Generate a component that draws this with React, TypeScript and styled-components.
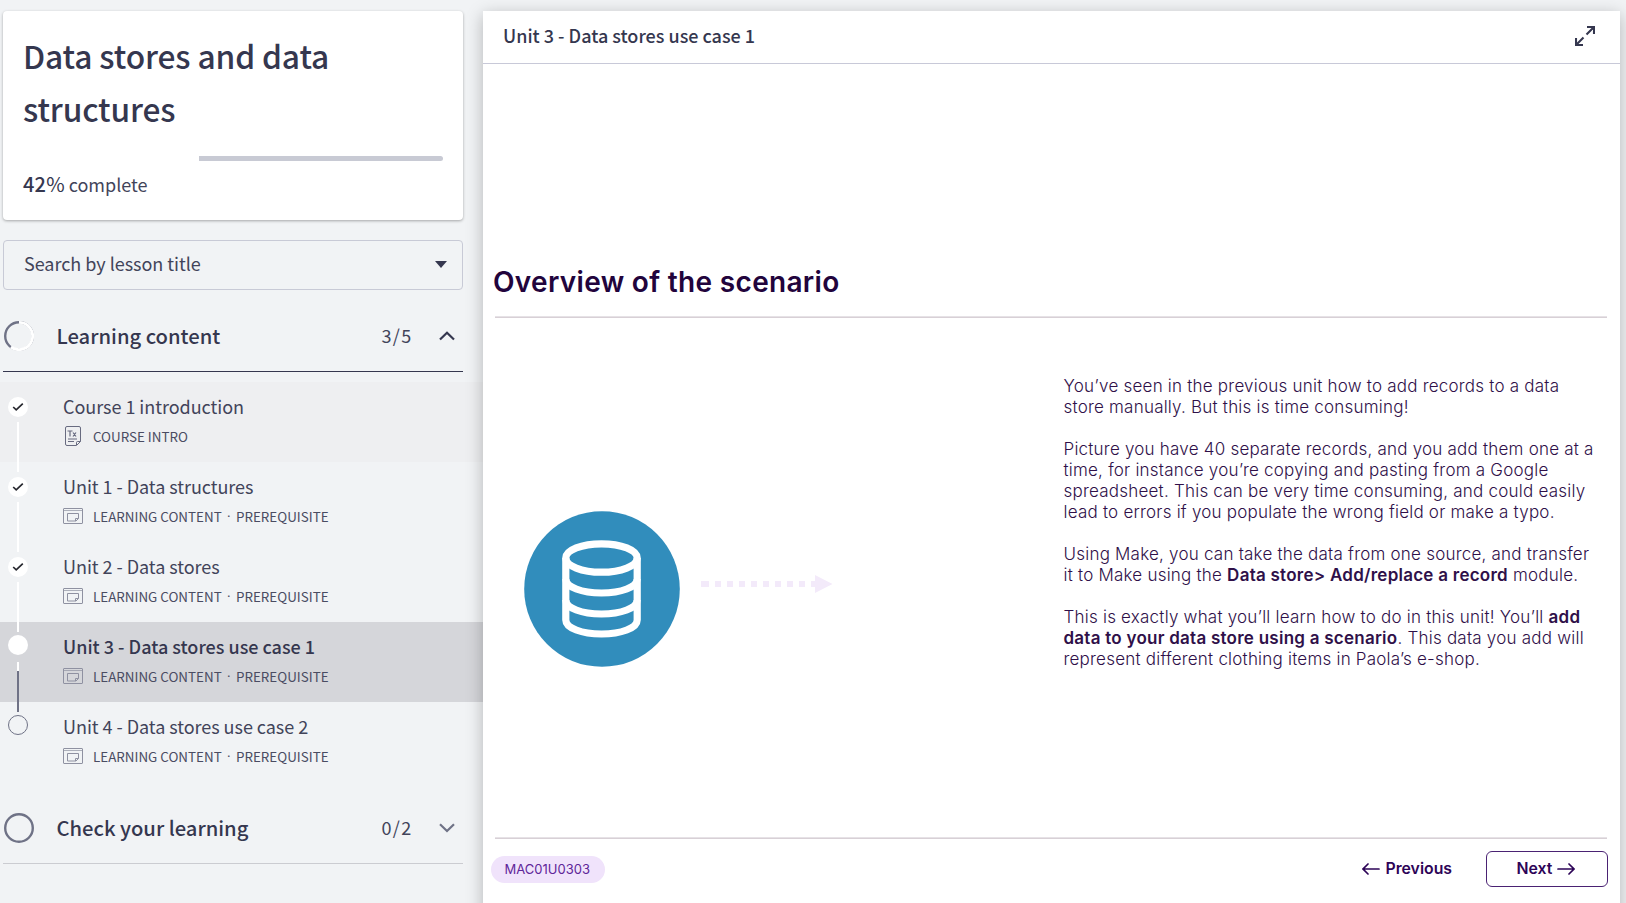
import React from "react";
import styled, { createGlobalStyle } from "styled-components";

const sans = `"Noto Sans CJK SC", "Open Sans", sans-serif`;
const inter = `Inter, "Liberation Sans", sans-serif`;
const ink = "#35374f";
const softInk = "#42445a";
const slate = "#6f7286";

const GlobalStyle = createGlobalStyle`
  * { box-sizing: border-box; }
  body { margin: 0; background: #f1f3f5; color: ${ink}; font-family: ${sans}; overflow: hidden; }
  h1, h2, p { margin: 0; }
  button { font: inherit; color: inherit; background: none; border: 0; padding: 0; }
  svg { display: block; flex: none; }
`;

const Page = styled.div`
  display: flex;
  height: 903px;
  padding-top: 11px;
  overflow: hidden;
`;

/* ---------- sidebar ---------- */

const Sidebar = styled.aside`
  width: 483px;
  flex: none;
`;

const CourseCard = styled.section`
  width: 460px;
  height: 209px;
  margin-left: 3px;
  padding: 18px 20px 0;
  background: #fff;
  border-radius: 4px;
  box-shadow: 0 1px 3px rgba(0, 0, 0, 0.32);
`;

const CourseTitle = styled.h1`
  font-size: 31.7px;
  font-weight: 500;
  line-height: 53px;
  letter-spacing: -0.12px;
  width: 380px;
`;

const Track = styled.div`
  display: flex;
  justify-content: flex-end;
  height: 5px;
  margin-top: 21px;
`;

const Remaining = styled.div<{ $percent: number }>`
  width: ${(p) => p.$percent}%;
  background: #c8cad4;
  border-radius: 0 3px 3px 0;
`;

const Progress = styled.p`
  margin-top: 8px;
  font-size: 18px;
  line-height: 30px;
  color: ${softInk};
`;

const Percent = styled.span`
  font-size: 20px;
  color: ${ink};
  b { font-weight: 500; letter-spacing: 0.2px; }
`;

const Search = styled.button`
  display: flex;
  align-items: center;
  justify-content: space-between;
  width: 460px;
  height: 50px;
  margin: 20px 0 0 3px;
  padding: 0 15px 4px 20px;
  border: 1px solid #c8cad6;
  border-radius: 4px;
  font-size: 18px;
  line-height: 26px;
  letter-spacing: -0.03px;
  color: ${softInk};
  svg { margin-top: 3px; }
`;

const SectionHead = styled.div<{ $open?: boolean }>`
  display: flex;
  align-items: center;
  width: 460px;
  height: 82px;
  margin-left: 3px;
  padding: 11px 8px 0 1px;
  border-bottom: 1px solid ${(p) => (p.$open ? "#35374f" : "#cbccd1")};
`;

const SectionTitle = styled.h2`
  flex: 1;
  margin-left: 22.5px;
  font-size: 20.2px;
  font-weight: 500;
  line-height: 30px;
`;

const Count = styled.span`
  padding-bottom: 2px;
  font-size: 18px;
  letter-spacing: 1.3px;
  margin-right: 26.5px;
  color: ${softInk};
`;

const Lessons = styled.ul`
  list-style: none;
  margin: 10px 0 0;
  padding: 0;
`;

type Tone = "intro" | "current" | "plain";
const tones: Record<Tone, string> = {
  intro: "#eeeff1",
  current: "#d5d6da",
  plain: "transparent",
};

const Lesson = styled.li<{ $tone: Tone }>`
  display: flex;
  height: 80px;
  background: ${(p) => tones[p.$tone]};
`;

const Rail = styled.div`
  position: relative;
  width: 63px;
  flex: none;
`;

const Dot = styled.span<{ $state: "done" | "current" | "todo" }>`
  display: grid;
  place-items: center;
  width: 20px;
  height: 20px;
  margin: ${(p) => (p.$state === "done" ? 15 : 13)}px 0 0 8px;
  border-radius: 50%;
  border: ${(p) => (p.$state === "todo" ? `1px solid ${slate}` : "0")};
  background: ${(p) => (p.$state === "todo" ? "transparent" : "#fff")};
`;

const Connector = styled.i<{ $half?: boolean }>`
  position: absolute;
  z-index: 1;
  top: 40px;
  left: 17px;
  width: 2px;
  height: 50px;
  background: ${(p) => (p.$half ? `linear-gradient(#fff 9px, ${slate} 9px)` : "#fff")};
`;

const LessonBody = styled.div`
  padding-top: 11px;
`;

const LessonTitle = styled.div<{ $strong: boolean }>`
  font-size: 18px;
  line-height: 26px;
  letter-spacing: ${(p) => (p.$strong ? 0 : -0.04)}px;
  font-weight: ${(p) => (p.$strong ? 500 : 400)};
  color: ${(p) => (p.$strong ? ink : softInk)};
  white-space: nowrap;
`;

const Meta = styled.div`
  display: flex;
  align-items: center;
  height: 20px;
  margin-top: 7px;
  font-size: 13.4px;
  line-height: 20px;
  color: #4a4c62;
  white-space: nowrap;
`;

const MetaIcon = styled.span`
  width: 30px;
`;

const Separator = styled.span`
  width: 14.3px;
  text-align: center;
  font-family: "Open Sans", sans-serif;
  font-weight: 500;
`;

/* ---------- lesson panel ---------- */

const Panel = styled.main`
  position: relative;
  z-index: 2;
  display: flex;
  flex-direction: column;
  width: 1137px;
  flex: none;
  height: 920px;
  background: #fff;
  box-shadow: 0 4px 16px rgba(0, 0, 0, 0.26);
`;

const PanelHead = styled.header`
  display: flex;
  align-items: center;
  justify-content: space-between;
  height: 53px;
  flex: none;
  padding: 0 25px 4px 20px;
  border-bottom: 1px solid #c8c9d8;
  font-size: 18px;
  line-height: 26px;
  font-weight: 500;
  svg { margin-top: 2px; }
`;

const Slide = styled.div`
  display: flex;
  flex-direction: column;
  margin: 0 13px 0 12px;
  padding-top: 201px;
  font-family: ${inter};
  color: #22043c;
`;

const SlideTitle = styled.h2`
  height: 51px;
  margin-left: -2px;
  font-size: 28px;
  line-height: 34px;
  font-weight: 600;
  letter-spacing: 0.32px;
`;

const Rule = styled.hr`
  width: 100%;
  height: 2px;
  margin: 0;
  border: 0;
  background: linear-gradient(#e6e2e6 1px, #d8d0d6 1px);
`;

const Columns = styled.div`
  display: flex;
  height: 519px;
`;

const Illustration = styled.div`
  display: flex;
  width: 568.5px;
  flex: none;
  padding: 193px 0 0 28.5px;
  gap: 21px;
`;

const ArrowHolder = styled.div`
  padding-top: 64px;
`;

const Copy = styled.div`
  padding-top: 58px;
  font-size: 17px;
  font-weight: 300;
  line-height: 21.03px;
  letter-spacing: 0.22px;
  color: #2f1049;
  white-space: nowrap;
  p + p { margin-top: 21.03px; }
  b { font-weight: 600; letter-spacing: 0.25px; }
`;

const Footer = styled.footer`
  display: flex;
  align-items: center;
  height: 60px;
  margin: 0 -1px 0 -4.5px;
  color: #2d0457;
  font-size: 15.8px;
  font-weight: 600;
`;

const Badge = styled.span`
  display: flex;
  align-items: center;
  justify-content: center;
  width: 114.500px;
  height: 27px;
  padding-right: 1px;
  border-radius: 14px;
  background: #f0e3fb;
  color: #5f2699;
  font-size: 13px;
  font-weight: 400;
  margin-right: auto;
`;

const NavButton = styled.button<{ $outlined?: boolean }>`
  display: flex;
  align-items: center;
  justify-content: center;
  gap: 5px;
  height: 36px;
  padding: ${(p) => (p.$outlined ? "0 2px 1px 0" : "0 0 1px")};
  width: ${(p) => (p.$outlined ? "122px" : "auto")};
  margin-left: ${(p) => (p.$outlined ? 34 : 0)}px;
  border: ${(p) => (p.$outlined ? "1px solid #4a2273" : "0")};
  border-radius: 6px;
`;

/* ---------- drawings ---------- */

const TextDocIcon = () => (
  <svg width="20" height="20" viewBox="0 0 20 20" fill="none" stroke="#686b80" strokeWidth="1">
    <path d="M4 .5h12q1.500 0 1.500 1.500v13.500l-4 4H4q-1.500 0-1.500-1.500V2Q2.500.5 4 .5Z" />
    <path d="M13.500 19v-2.500q0-1 1-1h3" />
    <path d="M4.500 5h5M7 5v5.500M10 6.500l3 4M13 6.500l-3 4" strokeWidth="1.200" />
    <path d="M5 13h9M5 15.500h6" />
  </svg>
);

const SlideIcon = () => (
  <svg width="20" height="16" viewBox="0 0 20 16" fill="none" stroke="#8f91a1" strokeWidth="1">
    <rect x=".5" y=".5" width="19" height="15" rx=".5" />
    <path d="M1 2.500h18" strokeOpacity=".7" />
    <path d="M4.500 5.500h11v5l-2.500 2.500h-8.500Z" />
    <path d="M12.500 13v-2.500h3" />
  </svg>
);

const CheckIcon = () => (
  <svg width="12" height="10" viewBox="0 0 12 10" fill="none" stroke="#26272e" strokeWidth="1.700">
    <path d="M1.200 5l3 2.800L10.800 1.600" />
  </svg>
);

const Ring = ({ partial }: { partial?: boolean }) => (
  <svg width="30" height="30" viewBox="0 0 30 30" fill="none">
    <circle cx="15" cy="15" r="13.800" stroke={slate} strokeWidth={2.4} />
    {partial && (
      <>
        <path d="M15 1.200A13.800 13.800 0 1 1 6.900 26.200" stroke="#cfd1d8" strokeWidth="2.600" />
        <path d="M15 1.400A13.600 13.600 0 1 1 7 26" stroke="#fff" strokeWidth="2.800" />
      </>
    )}
  </svg>
);

const Chevron = ({ up }: { up?: boolean }) => (
  <svg width="16" height="10" viewBox="0 0 16 10" fill="none" stroke={up ? ink : slate} strokeWidth="2.200">
    <path d={up ? "M1 8.500 8 1.700l7 6.800" : "M1 1.200l7 6.800 7-6.800"} />
  </svg>
);

const ExpandIcon = () => (
  <svg width="20" height="20" viewBox="0 0 20 20" fill="none" stroke={ink} strokeWidth="2.100">
    <path d="M12 1h7v7M18.500 1.500l-7 7M8 19H1v-7M1.500 18.500l7-7" />
  </svg>
);

const DatabaseArt = () => (
  <svg width="156" height="156" viewBox="0 0 156 156" fill="none">
    <circle cx="78" cy="78" r="77.800" fill="#318dbc" />
    <g stroke="#fff" strokeWidth="7.200">
      <ellipse cx="77.500" cy="47" rx="35.700" ry="14.200" />
      <path d="M41.800 47v62c0 8 16 14 35.700 14s35.700-6 35.700-14V47" />
      <path d="M41.800 68c0 8 16 14 35.700 14s35.700-6 35.700-14M41.800 89c0 8 16 14 35.700 14s35.700-6 35.700-14" />
    </g>
  </svg>
);

const DottedArrow = () => (
  <svg width="132" height="18" viewBox="0 0 132 18" fill="#f3eafa">
    <rect x="0" y="6" width="8" height="6" />
    {[14, 26, 38, 50, 62, 74, 86, 98].map((x) => (
      <rect key={x} x={x} y="6" width="6" height="6" />
    ))}
    <path d="M110 6h4V0l17.500 9L114 18v-6h-4Z" />
  </svg>
);

const NavArrow = ({ left }: { left?: boolean }) => (
  <svg width="18" height="12" viewBox="0 0 18 12" fill="none" stroke="#2d0457" strokeWidth="1.700" strokeLinecap="round">
    <path d={left ? "M6 1 1 6l5 5M1.500 6H17" : "M12 1l5 5-5 5M16.500 6H1"} />
  </svg>
);

/* ---------- content ---------- */

type LessonItem = { title: string; state: "done" | "current" | "todo"; intro?: boolean };
const lessons: LessonItem[] = [
  { title: "Course 1 introduction", state: "done", intro: true },
  { title: "Unit 1 - Data structures", state: "done" },
  { title: "Unit 2 - Data stores", state: "done" },
  { title: "Unit 3 - Data stores use case 1", state: "current" },
  { title: "Unit 4 - Data stores use case 2", state: "todo" },
];

export default function App() {
  return (
    <Page>
      <GlobalStyle />
      <Sidebar>
        <CourseCard>
          <CourseTitle>Data stores and data structures</CourseTitle>
          <Track>
            <Remaining $percent={58} />
          </Track>
          <Progress>
            <Percent><b>42</b>%</Percent> complete
          </Progress>
        </CourseCard>
        <Search>
          Search by lesson title
          <svg width="12" height="7" viewBox="0 0 12 7" fill={ink}>
            <path d="M0 0h12L6 7Z" />
          </svg>
        </Search>
        <SectionHead $open>
          <Ring partial />
          <SectionTitle>Learning content</SectionTitle>
          <Count>3/5</Count>
          <Chevron up />
        </SectionHead>
        <Lessons>
          {lessons.map((l) => (
            <Lesson key={l.title} $tone={l.intro ? "intro" : l.state === "current" ? "current" : "plain"}>
              <Rail>
                <Dot $state={l.state}>{l.state === "done" && <CheckIcon />}</Dot>
                {l.state !== "todo" && <Connector $half={l.state === "current"} />}
              </Rail>
              <LessonBody>
                <LessonTitle $strong={l.state === "current"}>{l.title}</LessonTitle>
                <Meta>
                  <MetaIcon>{l.intro ? <TextDocIcon /> : <SlideIcon />}</MetaIcon>
                  {l.intro ? (
                    <span>COURSE INTRO</span>
                  ) : (
                    <>
                      <span>LEARNING CONTENT</span>
                      <Separator>·</Separator>
                      <span>PREREQUISITE</span>
                    </>
                  )}
                </Meta>
              </LessonBody>
            </Lesson>
          ))}
        </Lessons>
        <SectionHead>
          <Ring />
          <SectionTitle>Check your learning</SectionTitle>
          <Count>0/2</Count>
          <Chevron />
        </SectionHead>
      </Sidebar>
      <Panel>
        <PanelHead>
          Unit 3 - Data stores use case 1
          <ExpandIcon />
        </PanelHead>
        <Slide>
          <SlideTitle>Overview of the scenario</SlideTitle>
          <Rule />
          <Columns>
            <Illustration>
              <DatabaseArt />
              <ArrowHolder>
                <DottedArrow />
              </ArrowHolder>
            </Illustration>
            <Copy>
              <p>
                You’ve seen in the previous unit how to add records to a data
                <br />
                store manually. But this is time consuming!
              </p>
              <p>
                Picture you have 40 separate records, and you add them one at a
                <br />
                time, for instance you’re copying and pasting from a Google
                <br />
                spreadsheet. This can be very time consuming, and could easily
                <br />
                lead to errors if you populate the wrong field or make a typo.
              </p>
              <p>
                Using Make, you can take the data from one source, and transfer
                <br />
                it to Make using the <b>Data store&gt; Add/replace a record</b> module.
              </p>
              <p>
                This is exactly what you’ll learn how to do in this unit! You’ll <b>add</b>
                <br />
                <b>data to your data store using a scenario</b>. This data you add will
                <br />
                represent different clothing items in Paola’s e-shop.
              </p>
            </Copy>
          </Columns>
          <Rule />
          <Footer>
            <Badge>MAC01U0303</Badge>
            <NavButton>
              <NavArrow left />
              Previous
            </NavButton>
            <NavButton $outlined>
              Next
              <NavArrow />
            </NavButton>
          </Footer>
        </Slide>
      </Panel>
    </Page>
  );
}
